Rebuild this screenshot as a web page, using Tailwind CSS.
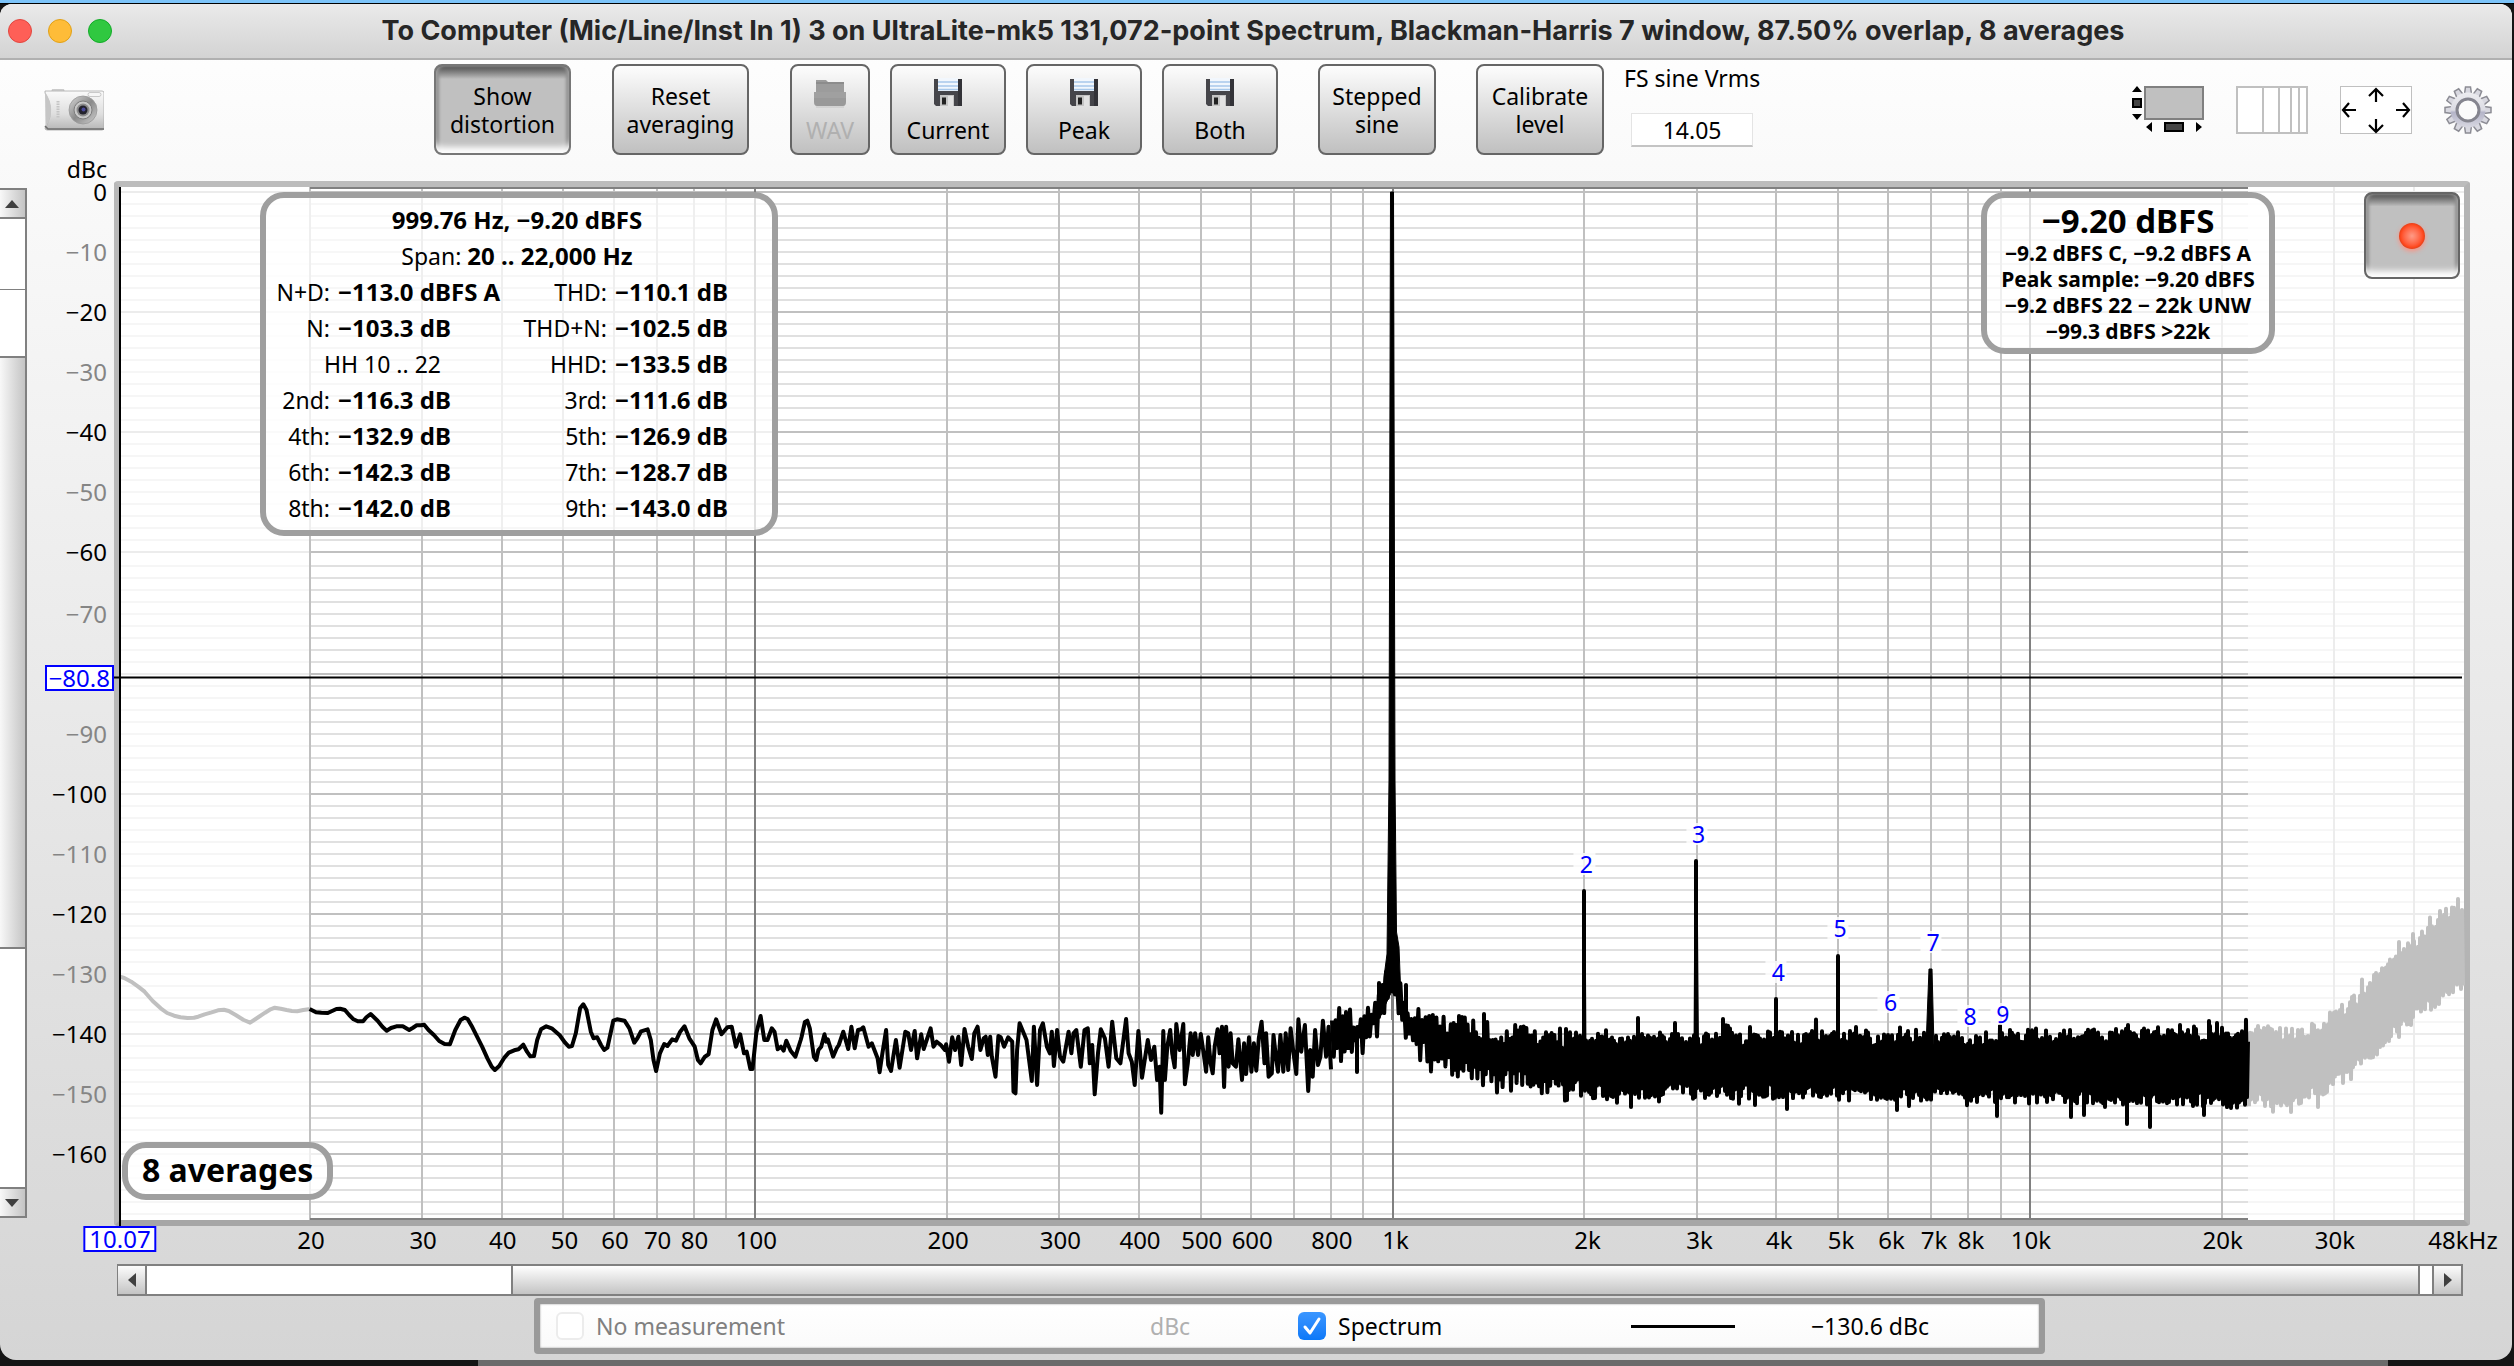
<!DOCTYPE html>
<html lang="en">
<head>
<meta charset="utf-8">
<title>Spectrum analyser</title>
<script src="https://cdn.jsdelivr.net/npm/@tailwindcss/browser@4"></script>
</head>
<body class="flex min-h-screen flex-col bg-[#161616] font-['Noto_Sans',sans-serif] text-[23px] leading-7 text-black">
<div class="h-[3px] bg-[#7cc4fa]"></div>
<div class="flex flex-1 flex-col border-t border-black bg-[linear-gradient(to_right,#151515_19%,#6b6b6b_19%,#6b6b6b_95%,#151515_95%)]">
<main class="mr-0.5 mb-1.5 flex flex-1 flex-col overflow-hidden rounded-t-xl rounded-b-2xl bg-gradient-to-b from-[#ffffff] to-[#d5d5d5]">

  <header class="flex h-14 items-center border-b-2 border-[#b0b0b0] bg-gradient-to-b from-[#eaeaea] to-[#d3d3d3] pl-2">
    <div class="flex w-28 gap-4">
      <button aria-label="Close" class="size-6 rounded-full border border-[#e2463f] bg-[#fe5f57]"></button>
      <button aria-label="Minimise" class="size-6 rounded-full border border-[#e1a116] bg-[#febc38]"></button>
      <button aria-label="Zoom" class="size-6 rounded-full border border-[#12ac28] bg-[#30c840]"></button>
    </div>
    <h1 class="flex-1 pr-[126px] text-center font-['Inter',sans-serif] text-[27px] font-bold whitespace-nowrap text-[#262626]">To Computer (Mic/Line/Inst In 1) 3 on UltraLite-mk5 131,072-point Spectrum, Blackman-Harris 7 window, 87.50% overlap, 8 averages</h1>
  </header>

  <div class="flex items-start pt-1 pr-5 pl-11">
    <button aria-label="Capture image" class="mt-[25px] w-[60px]">
      <svg viewBox="0 0 60 42" class="block h-[42px] w-[60px]">
        <defs>
          <linearGradient id="cam" x1="0" y1="0" x2="0" y2="1"><stop offset="0" stop-color="#fafafa"/><stop offset=".6" stop-color="#dedede"/><stop offset="1" stop-color="#b5b5b5"/></linearGradient>
          <linearGradient id="ring" x1="0" y1="0" x2="1" y2="1"><stop offset="0" stop-color="#d8d8d8"/><stop offset=".5" stop-color="#8a8a8a"/><stop offset="1" stop-color="#d0d0d0"/></linearGradient>
        </defs>
        <rect x="8" y="0" width="12" height="4" rx="1.5" fill="#d5d5d5" stroke="#b5b5b5" stroke-width=".6"/>
        <path d="M1 2H58Q60 2 60 4V39Q60 41 58 41H3Q1 41 1 39L3 36Q11 20 1 4Z" fill="url(#cam)" stroke="#a8a8a8" stroke-width=".8"/>
        <path d="M1 3Q13 20 1.500 38Z" fill="#c6c6c6"/>
        <path d="M1 37L4 40H60" fill="none" stroke="#6e6e6e" stroke-width="1.600"/>
        <path d="M14 12V29" stroke="#c4c4c4" stroke-width="3" stroke-dasharray="1.500 1"/>
        <rect x="44" y="3.500" width="13" height="4" rx="2" fill="#f6f6f6" stroke="#bdbdbd" stroke-width=".8"/>
        <circle cx="39" cy="21" r="14" fill="url(#ring)" stroke="#999" stroke-width=".8"/>
        <circle cx="39" cy="21" r="9" fill="#c9c9c9" stroke="#7d7d7d"/>
        <circle cx="39" cy="21" r="6.500" fill="#8b8b8b"/>
        <circle cx="39" cy="21" r="4.500" fill="#23222c"/>
        <circle cx="39.500" cy="20.500" r="2" fill="#4a4a9a"/>
      </svg>
    </button>

    <div class="ml-[330px] flex items-start">
      <button class="h-[91px] w-[137px] rounded-lg border-2 border-[#777] bg-gradient-to-b from-[#4e4e4e] via-[#c0c0c0] via-15% to-[#c0c0c0] shadow-[inset_0_-9px_6px_-3px_#ffffff,inset_3px_0_3px_#8a8a8a,inset_-3px_0_3px_#8a8a8a]">Show<br>distortion</button>
      <button class="ml-[41px] h-[91px] w-[137px] rounded-lg border-2 border-[#666] bg-gradient-to-b from-[#fdfdfd] to-[#c0c0c0]">Reset<br>averaging</button>
      <button disabled class="ml-[41px] flex h-[91px] w-20 flex-col items-center gap-2 rounded-lg border-2 border-[#666] bg-gradient-to-b from-[#fdfdfd] to-[#c0c0c0] pt-3.5 text-[#b0b0b0]">
        <svg viewBox="0 0 32 28" class="h-7 w-8"><path d="M2 0H12L14 2H30V13H2Z" fill="#9c9c9c"/><path d="M2 2H30V4H2Z" fill="#8c8c8c"/><path d="M0 12H32V22Q32 26 29 26H3Q0 26 0 22Z" fill="#999"/><path d="M0 12H32V18H0Z" fill="#a0a0a0"/><path d="M2 27H30" stroke="#c4c4c4"/></svg>
        WAV</button>
      <button class="ml-5 flex h-[91px] w-[116px] flex-col items-center gap-2.5 rounded-lg border-2 border-[#666] bg-gradient-to-b from-[#fdfdfd] to-[#c0c0c0] pt-3"><svg class="size-7"><use href="#disk"/></svg>Current</button>
      <button class="ml-5 flex h-[91px] w-[116px] flex-col items-center gap-2.5 rounded-lg border-2 border-[#666] bg-gradient-to-b from-[#fdfdfd] to-[#c0c0c0] pt-3"><svg class="size-7"><use href="#disk"/></svg>Peak</button>
      <button class="ml-5 flex h-[91px] w-[116px] flex-col items-center gap-2.5 rounded-lg border-2 border-[#666] bg-gradient-to-b from-[#fdfdfd] to-[#c0c0c0] pt-3"><svg class="size-7"><use href="#disk"/></svg>Both</button>
      <button class="ml-10 h-[91px] w-[118px] rounded-lg border-2 border-[#666] bg-gradient-to-b from-[#fdfdfd] to-[#c0c0c0]">Stepped<br>sine</button>
      <button class="ml-10 h-[91px] w-[128px] rounded-lg border-2 border-[#666] bg-gradient-to-b from-[#fdfdfd] to-[#c0c0c0]">Calibrate<br>level</button>
      <label class="ml-5 flex flex-col items-center gap-[21px] whitespace-nowrap">FS sine Vrms
        <input value="14.05" class="h-[34px] w-[122px] border border-b-2 border-[#e4e4e4] border-b-[#c4c4c4] bg-white text-center">
      </label>
    </div>

    <div class="mt-[22px] ml-auto flex items-start gap-8">
      <button aria-label="Scrollbars"><svg viewBox="0 0 72 48" class="block h-12 w-[72px]"><rect x="13" y="1" width="58" height="32" fill="#c0c0c0" stroke="#808080" stroke-width="2"/><path d="M0 6L5 0L10 6Z M0 28L5 34L10 28Z M20 36V46L14 41Z M64 36V46L70 41Z"/><rect x="1" y="13" width="8" height="8" fill="#444" stroke="#000" stroke-width="2"/><rect x="33" y="37" width="18" height="8" fill="#444" stroke="#000" stroke-width="2"/></svg></button>
      <button aria-label="Frequency axis"><svg viewBox="0 0 72 48" class="block h-12 w-[72px]"><path d="M1 1H71V47H1ZM27 1V47M43 1V47M55 1V47M63 1V47" fill="#fff" stroke="#c0c0c0" stroke-width="2"/></svg></button>
      <button aria-label="Limits"><svg viewBox="0 0 72 48" class="block h-12 w-[72px]"><rect x=".5" y=".5" width="71" height="47" fill="#fff" stroke="#c0c0c0"/><path d="M36 16V3M29 10L36 3L43 10M36 33V46M29 39L36 46L43 39M16 24H3M9 17L3 24L9 31M56 24H69M63 17L69 24L63 31" fill="none" stroke="#000" stroke-width="2.200"/></svg></button>
      <button aria-label="Settings"><svg id="gear" viewBox="-24 -24 48 48" class="block size-12"></svg></button>
    </div>
  </div>

  <div class="mt-[26px] flex min-h-[400px] flex-1">
    <div class="mt-[7px] mb-2 flex w-[27px] flex-col border-r-2 border-[#808080] bg-white">
      <button aria-label="Scroll up" class="h-[31px] border-y-2 border-[#808080] bg-gradient-to-r from-[#f8f8f8] to-[#c4c4c4]"><svg viewBox="0 0 25 27"><path d="M5 18L12 10L19 18Z" fill="#404040"/></svg></button>
      <div class="h-[71px] border-b border-[#808080]"></div>
      <div class="h-[66px]"></div>
      <div class="flex-[593] border-y-2 border-[#808080] bg-gradient-to-r from-[#f8f8f8] to-[#c4c4c4]"></div>
      <div class="flex-[240]"></div>
      <button aria-label="Scroll down" class="h-[31px] border-y-2 border-[#808080] bg-gradient-to-r from-[#f8f8f8] to-[#c4c4c4]"><svg viewBox="0 0 25 27"><path d="M5 10L12 18L19 10Z" fill="#404040"/></svg></button>
    </div>

    <div id="yaxis" class="relative my-1.5 w-[87px] text-2xl"></div>

    <section aria-label="Spectrum plot" class="relative mr-[42px] flex-1 rounded border-6 border-t-[#bcbcbc] border-r-[#b4b4b4] border-b-[#a6a6a6] border-l-[#b8b8b8] bg-white">
      <svg id="chart" viewBox="0 0 2344 1033" preserveAspectRatio="none" class="absolute inset-0 size-full overflow-visible"></svg>
      <div id="marks" class="absolute inset-0"></div>

      <table class="absolute top-[5px] left-[140px] w-[518px] table-fixed border-separate border-spacing-0 rounded-3xl border-6 border-[#9f9f9f] bg-white/75 pt-1 pb-1">
        <colgroup><col class="w-[64px]"><col class="w-[165px]"><col class="w-28"><col></colgroup>
        <thead>
          <tr class="h-9"><th colspan="4" class="p-0 pr-1 text-2xl leading-7">999.76 Hz, −9.20 dBFS</th></tr>
          <tr class="h-9"><td colspan="4" class="p-0 pr-1 text-center leading-7">Span: <b class="text-2xl leading-7">20 .. 22,000 Hz</b></td></tr>
        </thead>
        <tbody id="dist"></tbody>
      </table>

      <div class="absolute top-[5px] right-[189px] flex w-[294px] flex-col items-center rounded-3xl border-6 border-[#9f9f9f] bg-white/75 py-1 text-[21px] leading-[26px] font-bold whitespace-nowrap">
        <p class="text-[33px] leading-[38px]">−9.20 dBFS</p>
        <p>−9.2 dBFS C, −9.2 dBFS A</p>
        <p>Peak sample: −9.20 dBFS</p>
        <p>−9.2 dBFS 22 − 22k UNW</p>
        <p>−99.3 dBFS &gt;22k</p>
      </div>

      <button aria-label="Record" class="absolute top-[5px] right-1 grid h-[87px] w-24 place-items-center rounded-lg border-2 border-[#666] bg-gradient-to-b from-[#4e4e4e] via-[#c0c0c0] via-15% to-[#c0c0c0] shadow-[inset_0_-9px_6px_-3px_#ffffff,inset_3px_0_3px_#8a8a8a,inset_-3px_0_3px_#8a8a8a]">
        <span class="size-[26px] rounded-full bg-radial from-[#ff9a86] via-[#ff4a20] via-60% to-[#a82000] shadow-[0_2px_5px_#ff9080]"></span>
      </button>

      <div class="absolute bottom-5 left-0.5 rounded-3xl border-6 border-[#9f9f9f] bg-white/75 px-3.5 pt-0.5 pb-1 text-[32px] leading-10 font-bold">8 averages</div>
    </section>
  </div>

  <div id="xaxis" class="relative mr-12 ml-[120px] h-[38px] text-2xl"></div>

  <div class="mr-[49px] ml-[117px] flex h-8 border-y-2 border-[#808080] bg-white">
    <button aria-label="Scroll left" class="w-[30px] border-r-2 border-l border-[#808080] bg-gradient-to-b from-[#fcfcfc] to-[#c4c4c4]"><svg viewBox="0 0 27 28"><path d="M18 7V21L10 14Z" fill="#404040"/></svg></button>
    <div class="flex-[365]"></div>
    <div class="flex-[1908] border-x-2 border-[#808080] bg-gradient-to-b from-[#ffffff] to-[#c4c4c4]"></div>
    <div class="w-3"></div>
    <button aria-label="Scroll right" class="w-[31px] border-x-2 border-[#808080] bg-gradient-to-b from-[#fcfcfc] to-[#c4c4c4]"><svg viewBox="0 0 27 28"><path d="M10 7V21L18 14Z" fill="#404040"/></svg></button>
  </div>

  <footer class="mt-0.5 mr-[467px] mb-1.5 ml-[534px] flex h-14 items-center rounded border-6 border-[#9a9a9a] bg-gradient-to-b from-[#ffffff] to-[#fafafa] shadow-[inset_0_0_2px_#888]">
    <label class="ml-4 flex w-[594px] items-center gap-3 text-[#808080]"><input type="checkbox" disabled class="size-7 appearance-none rounded-md border-2 border-[#ececec] bg-white">No measurement</label>
    <span class="w-[148px] text-[#b0b0b0]">dBc</span>
    <label class="flex items-center gap-3">
      <span class="grid size-7">
        <input type="checkbox" checked class="col-start-1 row-start-1 size-7 appearance-none rounded-md bg-gradient-to-b from-[#3a96ff] to-[#0a78f8]">
        <svg viewBox="0 0 28 28" class="pointer-events-none col-start-1 row-start-1 size-7"><path d="M7 15L12 21L21 7" fill="none" stroke="#fff" stroke-width="3" stroke-linecap="round" stroke-linejoin="round"/></svg>
      </span>Spectrum</label>
    <hr class="ml-auto w-[104px] border-t-3 border-black">
    <output class="mr-[110px] ml-[76px]">−130.6 dBc</output>
  </footer>
</main>
</div>

<svg class="hidden">
  <symbol id="disk" viewBox="0 0 28 28">
    <path d="M0 1H28V28H2L0 26Z" fill="#45454a"/><path d="M24 1H28V28H24Z" fill="#333338"/>
    <rect x="4" y="0" width="20" height="13" fill="#f2f7fd"/><path d="M4 4H24M4 8H24M4 11.500H24" stroke="#a8c8ea" stroke-width="1.300"/>
    <rect x="6" y="17" width="14" height="11" fill="#c4c4c4"/><rect x="8" y="19.500" width="4" height="7" fill="#222"/><rect x="14" y="18" width="5" height="10" fill="#e2e2e2"/>
  </symbol>
</svg>

<script>
const W = 2344, H = 1033, F0 = 10.07, F1 = 48000;
const fx = f => W * Math.log(f / F0) / Math.log(F1 / F0);
const dy = d => 5 + 6 * d + (d > 60 ? 2 : 0);
const k = f => f >= 1000 ? f / 1000 + 'k' : String(f);

/* distortion figures */
const rows = [['N+D:', '−113.0 dBFS A', 'THD:', '−110.1 dB'], ['N:', '−103.3 dB', 'THD+N:', '−102.5 dB'], ['HH', '', 'HHD:', '−133.5 dB'],
  ['2nd:', '−116.3 dB', '3rd:', '−111.6 dB'], ['4th:', '−132.9 dB', '5th:', '−126.9 dB'], ['6th:', '−142.3 dB', '7th:', '−128.7 dB'], ['8th:', '−142.0 dB', '9th:', '−143.0 dB']];
const cell = (a, b) => `<td class="p-0 text-right">${a}</td><td class="p-0 pl-2 text-2xl leading-7 font-bold">${b}</td>`;
document.getElementById('dist').innerHTML = rows.map(r => `<tr class="h-9 whitespace-nowrap">${r[0] === 'HH' ? '<td colspan="2" class="p-0 pl-1 text-center">HH 10 .. 22</td>' : cell(r[0], r[1])}${cell(r[2], r[3])}</tr>`).join('');

/* axis labels */
let y = '<span class="absolute right-[7px] -top-7 text-[23px] leading-5">dBc</span>';
for (let d = 0; d <= 160; d += 10) {
  if (d === 80) continue;
  y += `<span class="absolute right-[7px] -translate-y-1/2 leading-5 ${d % 20 ? 'text-[#858585]' : ''}" style="top:${dy(d) / H * 100}%">${d ? '−' + d : 0}</span>`;
}
y += `<output class="absolute right-0 z-10 -translate-y-1/2 border-2 border-[#0000ff] bg-white px-0.5 leading-[22px] text-[#0000ff]" style="top:${490.5 / H * 100}%">−80.8</output>`;
document.getElementById('yaxis').innerHTML = y;

let x = '<output class="absolute left-0 top-0 -translate-x-1/2 border-2 border-[#0000ff] bg-white px-1 leading-[22px] text-[#0000ff]">10.07</output>';
for (const f of [20, 30, 40, 50, 60, 70, 80, 100, 200, 300, 400, 500, 600, 800, 1000, 2000, 3000, 4000, 5000, 6000, 7000, 8000, 10000, 20000, 30000, 48000])
  x += `<span class="absolute -top-0.5 -translate-x-1/2 ${f >= 1000 && f < 10000 ? 'pl-1.5' : f === 48000 ? 'pr-0.5' : 'pl-0.5'}" style="left:${fx(f) / W * 100}%">${f === 48000 ? '48kHz' : k(f)}</span>`;
document.getElementById('xaxis').innerHTML = x;

/* grid */
const xa = fx(20), xb = fx(22000);
let g = '';
const line = (x1, y1, x2, y2, c) => { g += `<path d="M${x1} ${y1}L${x2} ${y2}" stroke="${c}" stroke-width="2"/>`; };
for (let d = 0; d <= 170; d += 2) {
  const m = d % 20 === 0, v = dy(d);
  line(0, v, W, v, m ? '#ececec' : '#f6f6f6');
  line(xa, v, xb, v, m ? '#c0c0c0' : '#e0e0e0');
}
for (const dec of [10, 100, 1000, 10000]) for (let n = 1; n <= 9; n++) {
  const f = dec * n;
  if (f < 20 || f > 40000) continue;
  const v = Math.round(fx(f));
  line(v, 0, v, H, f > 22000 ? '#ececec' : n === 1 ? '#808080' : '#c0c0c0');
}
line(xa, 1, xb, 1, '#808080'); line(xa, H - 1, xb, H - 1, '#808080');
g = `<g shape-rendering="crispEdges">${g}</g>`;

const pts = (s, sx, ox, oy) => s.split(' ').map(p => { const [a, b] = p.split(',').map(Number); return [a / sx + ox, b / 3 + oy]; });
const low = pts('224,230 232,234 245,245 258,260 270,275 285,303 300,325 312,339 325,347 337,352 350,354 362,353 370,350 382,343 395,337 407,331 418,329 427,333 440,345 455,360 467,368 480,354 495,338 505,328 513,323 524,326 535,330 545,333 555,334 566,330 580,327', 1.867, -120, 713);
const mid = pts('578,327 590,337 600,338 612,339 628,327 635,326 644,330 652,345 660,358 668,364 678,364 684,352 692,342 705,362 714,380 722,392 730,384 740,379 752,379 764,390 771,383 778,376 786,376 792,374 800,390 810,405 820,423 830,432 840,433 850,390 860,360 867,353 873,357 882,382 900,440 910,475 918,500 924,510 932,498 942,472 950,458 960,451 968,448 977,434 984,455 990,469 997,468 1003,420 1010,388 1020,379 1030,385 1045,406 1055,428 1062,440 1068,438 1075,400 1083,325 1089,313 1095,330 1103,395 1108,415 1115,412 1122,435 1128,450 1134,443 1145,362 1152,358 1166,362 1175,385 1184,428 1190,415 1197,394 1209,388 1215,420 1220,480 1225,513 1232,460 1240,432 1246,438 1255,418 1262,422 1270,395 1278,379 1287,415 1297,440 1303,480 1308,490 1316,470 1323,463 1330,390 1337,358 1347,403 1358,382 1366,380 1374,440 1382,403 1389,460 1394,455 1401,507 1405,507 1412,400 1420,348 1427,420 1433,420 1441,385 1446,395 1452,448 1458,440 1463,452 1468,422 1476,452 1485,470 1495,420', 1.867, -120, 713)
 .concat(pts('4,260 12,216 18,212 24,235 34,320 40,330 45,300 52,290 60,253 64,275 68,268 81,320 90,295 95,285 106,245 118,297 126,230 134,295 142,240 150,238 155,232 168,290 176,280 190,325 195,367 202,310 211,240 216,345 223,363 235,270 244,353 258,245 265,250 272,300 281,243 287,325 297,253 303,297 320,235 327,290 335,275 345,285 355,300 358,283 365,335 373,262 380,300 388,260 395,345 403,237 412,290 421,327 427,250 435,230 442,300 450,265 455,260 460,315 466,260 470,320 479,380 486,258 492,262 500,290 510,262 520,275 523,425 528,430 532,300 538,220 545,240 555,270 568,393 573,230 581,405 588,240 595,220 605,290 612,310 617,245 622,348 630,240 637,320 645,335 658,245 665,310 670,250 677,240 688,350 697,240 705,235 710,340 716,285 722,433 730,310 737,238 747,265 756,350 765,215 775,325 785,340 799,207 805,310 813,335 820,405 829,243 838,383 852,270 860,330 868,290 875,390 881,350 885,488 890,243 894,390 900,290 907,240 912,310 918,352 922,222 930,300 939,222 943,403 950,340 957,250 962,315 968,250 975,315 982,252 990,320 995,365 1000,262 1006,340 1011,370 1016,290 1023,238 1028,310 1034,230 1039,411 1044,230 1050,350 1055,250 1060,340 1068,350 1074,268 1083,390 1088,280 1093,372 1100,262 1106,365 1112,280 1118,362 1124,265 1131,215 1138,340 1142,250 1148,380 1156,370 1160,255 1166,320 1171,365 1177,255 1184,365 1190,250 1196,360 1202,235 1208,300 1216,372 1221,208 1228,305 1237,225 1245,423 1250,300 1256,380 1262,240 1269,345 1275,320 1281,212 1289,320 1295,230 1301,358', 2.45, 680, 763));

/* noise band: x, upper edge, lower edge */
const env = [[1211, 834, 876], [1230, 828, 868], [1245, 824, 864], [1254, 812, 846], [1259, 800, 835], [1266, 773, 818], [1272, 760, 795], [1276, 778, 812], [1285, 810, 852], [1300, 824, 868], [1330, 832, 886], [1380, 842, 898], [1480, 850, 906], [1600, 849, 908], [1800, 847, 910], [1950, 847, 912], [2128, 842, 917], [2175, 844, 915], [2200, 834, 907], [2232, 815, 882], [2260, 785, 862], [2300, 750, 826], [2344, 715, 798]];
const at = (v, i) => { let n = 1; while (n < env.length - 1 && env[n][0] < v) n++; const a = env[n - 1], b = env[n]; return a[i] + (b[i] - a[i]) * (v - a[0]) / (b[0] - a[0]); };
let seed = 91;
const rnd = () => (seed = (seed * 16807) % 2147483647) / 2147483647;
const noise = [[], []];
let up = true;
for (let v = 1212; v < W; v += v < 1330 ? 1.8 : v < 1440 ? 1.4 : 1) {
  const j = v < 1255 || v > 1285 && v < 1480 ? 22 : 17, tail = rnd() < .08 ? 12 * rnd() : 0;
  const e = up ? at(v, 1) + rnd() * j - j / 4 - tail : at(v, 2) - rnd() * j + j / 4 + tail;
  noise[v < xb ? 0 : 1].push([v, e]);
  up = !up;
}
const poly = (a, c, w) => `<polyline points="${a.map(p => p[0].toFixed(1) + ',' + p[1].toFixed(1)).join(' ')}" fill="none" stroke="${c}" stroke-width="${w}" stroke-linejoin="round" stroke-linecap="butt"/>`;
const spikes = (list, c) => list.map(([a, b, base]) => `<path d="M${a} ${base}V${b}" stroke="${c}" stroke-width="4" stroke-linecap="round"/>`).join('');
g += poly(low, '#c0c0c0', 4) + poly(noise[1], '#c0c0c0', 4) + poly(mid, '#000', 4) + poly(noise[0], '#000', 4);
g += spikes([[2279, 755, 850], [2293, 747, 830], [2260, 787, 860], [2232, 810, 880], [2320, 724, 800], [2338, 712, 780], [2171, 925, 860], [2198, 920, 860]], '#c0c0c0');
g += spikes([[1237, 885, 850], [1226, 825, 850], [1259, 796, 830], [1286, 798, 840], [1339, 829, 870], [1364, 827, 870],
  [1447, 913, 880], [1511, 920, 880], [1518, 831, 870], [1555, 836, 870], [1603, 832, 870], [1635, 918, 880], [1667, 922, 880], [1777, 923, 880], [1877, 929, 880], [1951, 930, 880], [1964, 928, 880],
  [2007, 937, 880], [2030, 940, 880], [2084, 928, 880], [2089, 834, 870], [2097, 836, 870], [2008, 838, 870], [2060, 838, 870], [1464, 704, 870], [1576, 674, 870], [1656, 812, 870], [1718, 769, 870]], '#000');
g += '<path d="M1462.500 870L1463 704H1465L1466 870Z M1574 870L1575 674H1577L1578.500 870Z M1806 860L1809 782H1812L1814 860Z" stroke="#000" stroke-width="1"/>';
g += '<path d="M1270.500 5H1273.500L1275 593L1276.500 745L1279 760L1281 812L1273 806L1271 806L1262 825L1264 790L1267 767L1269 593Z" stroke="#000" stroke-width="1" stroke-linejoin="round"/>';
g += '<path d="M1272 807V833" stroke="#808080" stroke-width="2"/>';
g += `<path d="M-6 490.500H${W - 2}M0 0V${H + 7}" stroke="#000" stroke-width="2"/>`;
document.getElementById('chart').innerHTML = g;

/* harmonic numbers */
document.getElementById('marks').innerHTML = [[2, 677], [3, 647], [4, 785], [5, 741], [6, 815], [7, 755], [8, 829], [9, 827]]
  .map(([n, v]) => `<span class="absolute -translate-x-1/2 -translate-y-1/2 bg-white/80 pr-0.5 pl-1.5 leading-[22px] text-[#0000ff]" style="left:${fx(n * 1000) / W * 100}%;top:${v / H * 100}%">${n}</span>`).join('');

/* settings gear */
let teeth = '';
for (let i = 0; i < 12; i++) teeth += `<path d="M-3.500 -16L-2.500 -23H2.500L3.500 -16Z" transform="rotate(${i * 30})"/>`;
document.getElementById('gear').innerHTML = `<defs><linearGradient id="steel" gradientUnits="userSpaceOnUse" x1="0" y1="-23" x2="0" y2="23"><stop offset="0" stop-color="#f2f2f4"/><stop offset=".5" stop-color="#dcdce4"/><stop offset=".55" stop-color="#b4b4c8"/><stop offset="1" stop-color="#e4e4ea"/></linearGradient></defs>
<g fill="#d8d8e0" stroke="#8c8c94" stroke-width="1.500">${teeth}</g><circle r="17.500" fill="url(#steel)"/><circle r="11" fill="#fbfbfb" stroke="#85858f" stroke-width="3"/>`;
</script>
</body>
</html>
